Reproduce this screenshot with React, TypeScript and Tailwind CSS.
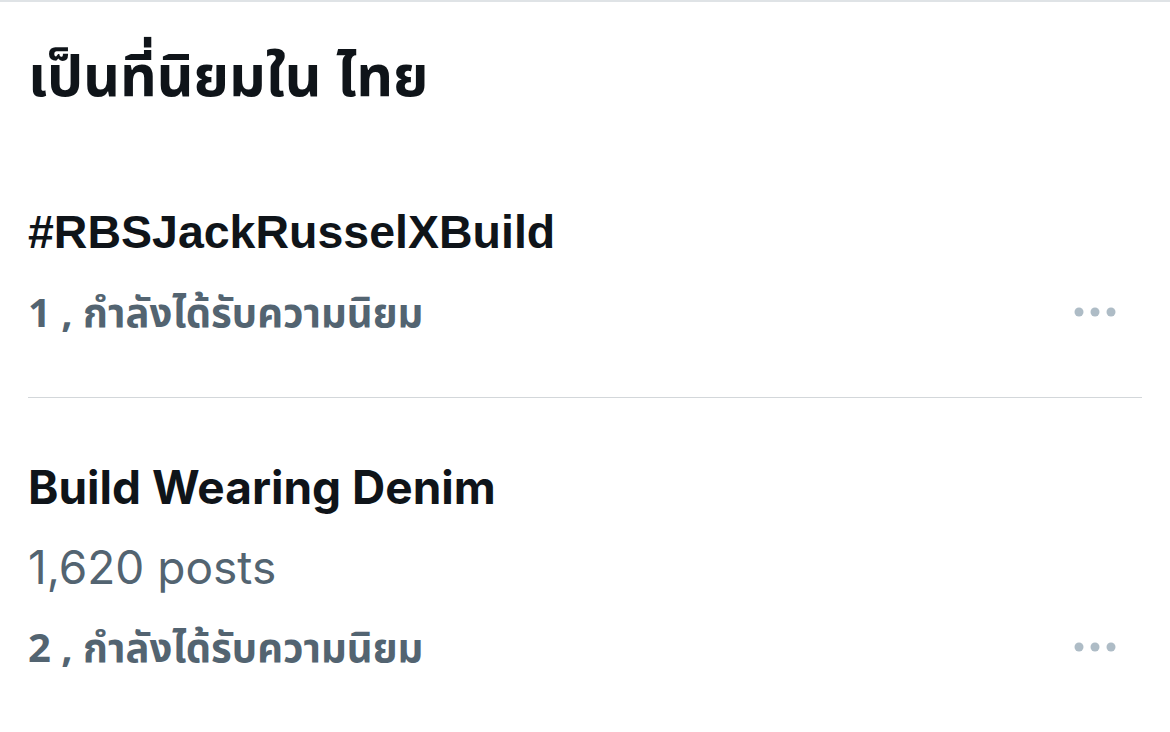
type Trend = {
  rank: number;
  name: string;
  posts?: string;
  titleClass: string;
};

const trends: Trend[] = [
  { rank: 1, name: "#RBSJackRusselXBuild", titleClass: "font-['Liberation_Sans',sans-serif] text-[46.5px]" },
  { rank: 2, name: "Build Wearing Denim", posts: "1,620 posts", titleClass: "font-['Inter',sans-serif] text-[46px]" },
];

const thai = "font-['Noto_Sans','Noto_Sans_Thai','Loma',sans-serif]";

function MoreDots() {
  return (
    <svg viewBox="0 0 42 10" className="mr-[26px] h-[10px] w-[42px] fill-[#aebcc6]">
      <circle cx="5" cy="5" r="4.5" />
      <circle cx="21" cy="5" r="4.5" />
      <circle cx="37" cy="5" r="4.5" />
    </svg>
  );
}

function TrendRow({ trend, first }: { trend: Trend; first: boolean }) {
  return (
    <div className={`flex flex-col ${first ? "pb-[45px]" : "pt-[49px] border-t border-[#d3d7da]"}`}>
      <p className={`${trend.titleClass} font-bold leading-[80px] text-[#0f1419]`}>{trend.name}</p>
      {trend.posts && (
        <p className="font-['Inter',sans-serif] text-[46px] leading-[80px] text-[#536471]">{trend.posts}</p>
      )}
      <div className="flex items-center justify-between">
        <p className={`${thai} text-[40px] font-bold leading-[80px] text-[#536471]`}>
          {trend.rank} , กำลังได้รับความนิยม
        </p>
        <MoreDots />
      </div>
    </div>
  );
}

export default function App() {
  return (
    <div className="h-[732px] w-[1170px] overflow-hidden border-t-2 border-[#dfe3e6] bg-white">
      <div className="pl-[28px] pr-[28px]">
        <h1 className={`${thai} pt-[30px] text-[57px] font-bold leading-[84px] text-[#0f1419]`}>
          เป็นที่นิยมใน ไทย
        </h1>
        <div className="mt-[76px] flex flex-col">
          {trends.map((t, i) => (
            <TrendRow key={t.rank} trend={t} first={i === 0} />
          ))}
        </div>
      </div>
    </div>
  );
}
